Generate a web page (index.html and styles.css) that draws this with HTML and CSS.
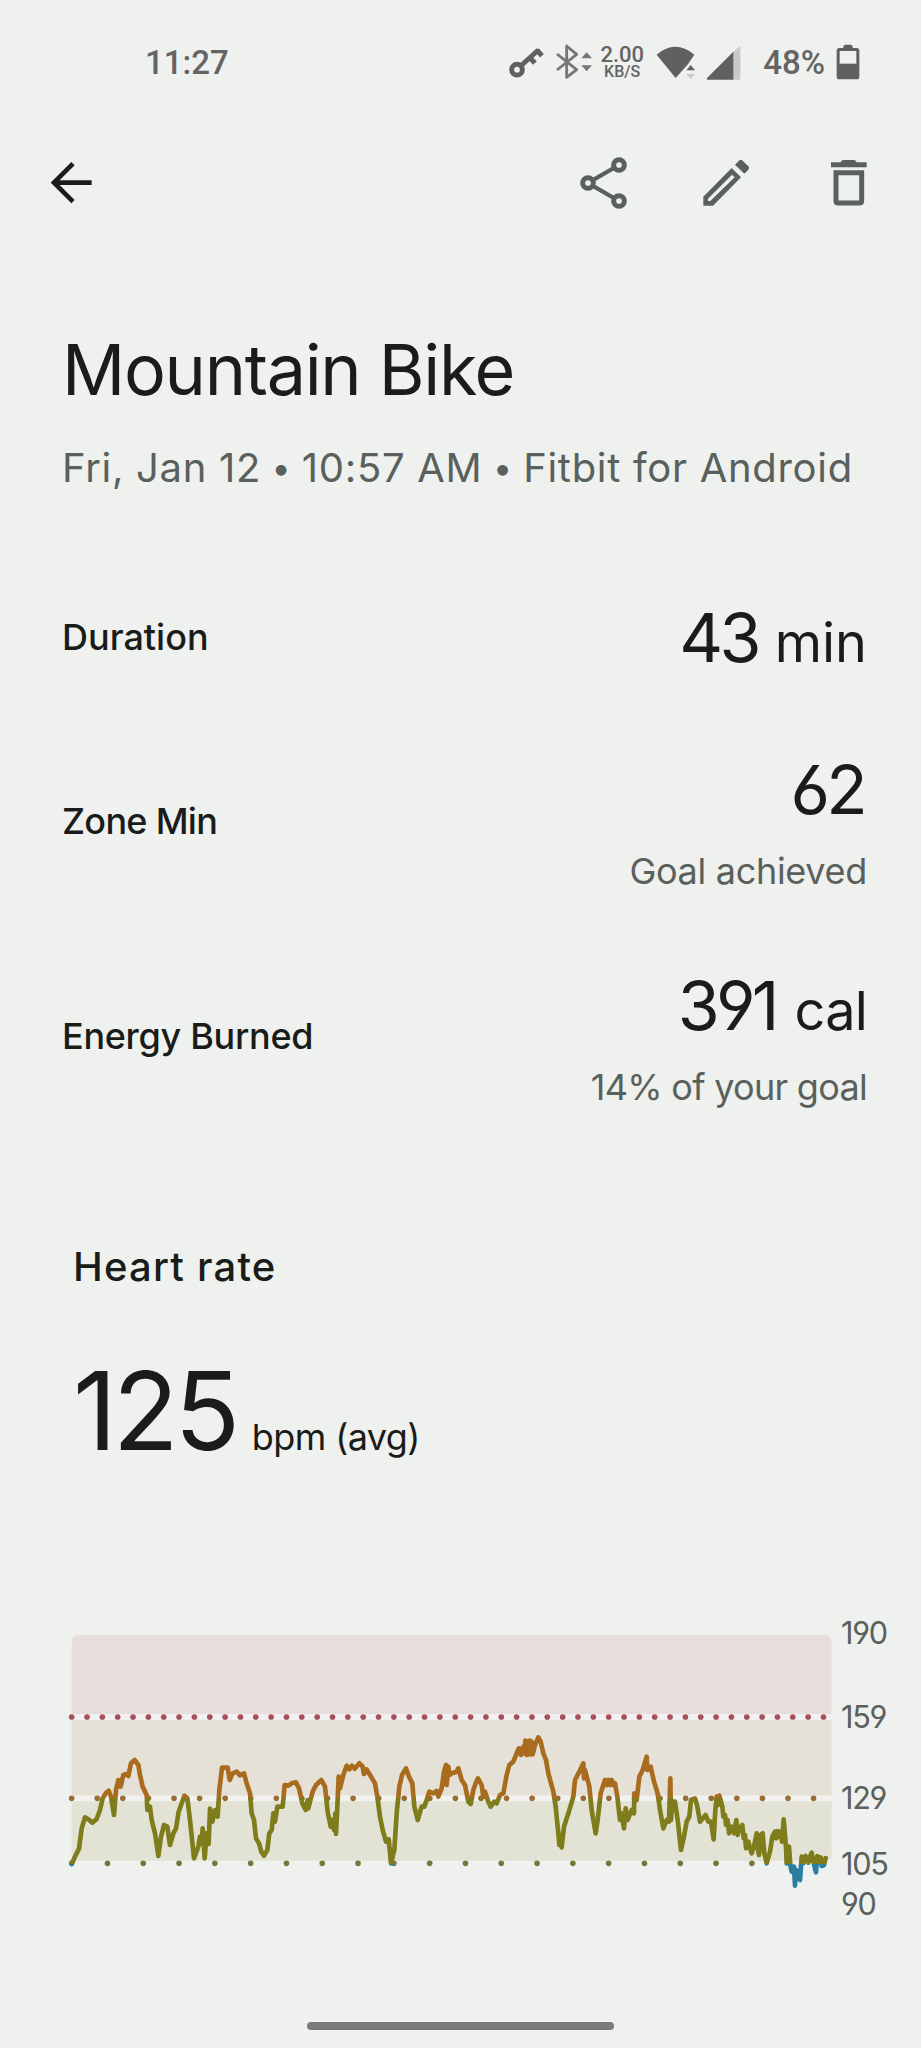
FILE: index.html
```html
<!DOCTYPE html>
<html lang="en">
<head>
  <meta charset="UTF-8">
  <meta name="viewport" content="width=device-width, initial-scale=1.0">
  <title>Mountain Bike</title>
  <link rel="stylesheet" href="styles.css">
</head>
<body>
  <div class="status-bar">
    <span class="clock">11:27</span>
    <div class="status-icons">
      <svg class="icon-key" width="36" height="32" viewBox="0 0 108 96">
        <circle cx="24" cy="71" r="16" fill="none" stroke="#5f605f" stroke-width="15"/>
        <path d="M35 60L88 12M83 12L99 29M62 35L78 51" fill="none" stroke="#5f605f" stroke-width="15"/>
      </svg>
      <svg class="icon-bt" width="36" height="38" viewBox="0 0 108 114">
        <path d="M3 33L62 80L32 103V9L62 34L3 81" fill="none" stroke="#757675" stroke-width="8.5" stroke-linejoin="round"/>
        <path d="M76 46L92 28L108 46ZM76 67L92 85L108 67Z" fill="#757675"/>
      </svg>
      <div class="net-speed">
        <span class="speed">2.00</span>
        <span class="unit">KB/S</span>
      </div>
      <svg class="icon-wifi" width="39" height="34" viewBox="0 0 117 102">
        <path d="M2 29Q58 -18 115 29L96 58L85 70L59 99Z" fill="#5f605f"/>
        <path d="M91 76L104 60L117 76Z" fill="#5f605f"/>
        <path d="M91 87L104 101L117 87Z" fill="#c8c9c8"/>
      </svg>
      <svg class="icon-signal" width="35" height="36" viewBox="0 0 105 108">
        <path d="M103 2V104H80V22Z" fill="#c8c9c8"/>
        <path d="M82 20V104H5Q0 104 3 99Z" fill="#5f605f"/>
      </svg>
      <span class="battery-text">48%</span>
      <svg class="icon-battery" width="24" height="36" viewBox="0 0 72 108">
        <path d="M22 8Q22 2 28 2H44Q50 2 50 8V12H62Q70 12 70 20V98Q70 106 62 106H10Q2 106 2 98V20Q2 12 10 12H22Z" fill="#5f605f"/>
        <path d="M11 21H61V59H11Z" fill="#eef1ee"/>
      </svg>
    </div>
  </div>

  <div class="app-bar">
    <svg class="back" width="42" height="42" viewBox="0 0 126 126">
      <path d="M66 5L9 62L66 119M9 62H122" fill="none" stroke="#1a1c1a" stroke-width="14"/>
    </svg>
    <div class="actions">
      <svg width="48" height="52" viewBox="0 0 144 156">
        <path d="M117 24L24 78L117 132" fill="none" stroke="#5a605c" stroke-width="13"/>
        <g fill="#eef1ee" stroke="#5a605c" stroke-width="15">
          <circle cx="117" cy="24" r="16"/>
          <circle cx="24" cy="78" r="16"/>
          <circle cx="117" cy="132" r="16"/>
        </g>
      </svg>
      <svg width="48" height="48" viewBox="0 0 144 144">
        <path d="M1 113L86 27L114 55L30 140H1ZM15 119V126H22L95 55L87 47Z" fill="#5a605c" fill-rule="evenodd"/>
        <path d="M96 17L108 5Q113 0 119 5L136 22Q141 27 136 32L124 44Z" fill="#5a605c"/>
      </svg>
      <svg width="38" height="48" viewBox="0 0 114 144">
        <path d="M3 10H32Q35 3 41 3H71Q77 3 80 10H110V25H3Z" fill="#5a605c"/>
        <path d="M18 41H95V125Q95 132 88 132H25Q18 132 18 125Z" fill="none" stroke="#5a605c" stroke-width="15"/>
      </svg>
    </div>
  </div>

  <div class="heading">
    <h1>Mountain Bike</h1>
    <p class="subtitle">Fri, Jan 12 <span class="dot">•</span> 10:57 AM <span class="dot">•</span> Fitbit for Android</p>
  </div>

  <div class="stats">
    <div class="stat">
      <span class="label duration">Duration</span>
      <div class="result">
        <div class="value"><span class="number">43</span><span class="value-unit">min</span></div>
      </div>
    </div>
    <div class="stat">
      <span class="label zone">Zone Min</span>
      <div class="result">
        <div class="value"><span class="number">62</span></div>
        <div class="goal">Goal achieved</div>
      </div>
    </div>
    <div class="stat">
      <span class="label energy">Energy Burned</span>
      <div class="result">
        <div class="value cal"><span class="number">391</span><span class="value-unit">cal</span></div>
        <div class="goal percent">14% of your goal</div>
      </div>
    </div>
  </div>

  <div class="heart-rate">
    <h2>Heart rate</h2>
    <div class="average"><span class="bpm">125</span><span class="bpm-unit">bpm (avg)</span></div>
  </div>

  <svg class="chart" width="861" height="320" viewBox="0 0 2583 960">
    <defs>
      <linearGradient id="zones" gradientUnits="userSpaceOnUse" x1="0" y1="0" x2="0" y2="960">
        <stop offset="0.557" stop-color="#a96b1e"/>
        <stop offset="0.557" stop-color="#7f7c1c"/>
        <stop offset="0.761" stop-color="#7f7c1c"/>
        <stop offset="0.761" stop-color="#2a7fa0"/>
      </linearGradient>
    </defs>
    <!-- zone bands -->
    <path d="M35 282V69Q35 45 59 45H2291Q2315 45 2315 69V282Z" fill="#e8dddb"/>
    <rect x="35" y="299" width="2280" height="228" fill="#e5e1d6"/>
    <path d="M35 544H2315V708Q2315 722 2301 722H35Z" fill="#e2e3d5"/>
    <path d="M35 291H2315M35 535H2315" stroke="#f1f2ef" stroke-width="15"/>
    <!-- zone limits -->
    <g fill="none" stroke-width="17" stroke-linecap="round">
      <path d="M35 291H2300" stroke="#a94f59" stroke-dasharray="0 46.03"/>
      <path d="M35 535H2270" stroke="#9a6c31" stroke-dasharray="0 76.75"/>
      <path d="M35 730H2100" stroke="#75783a" stroke-dasharray="0 107.4"/>
    </g>
    <polyline fill="none" stroke="url(#zones)" stroke-width="14" stroke-linecap="round" stroke-linejoin="round" points="
      35,732 45,710 57,686 65,625 75,592 88,600 97,608 110,597 120,570 128,535 137,520 146,512 153,530 162,585 168,510 175,480 182,500 190,465 198,462 205,468 213,430 224,420 235,435 240,465 248,500 260,525 262,570 270,560 275,600 285,640 295,708 303,650 312,615 322,620 330,675 340,640 348,625 356,575 373,527 382,535 390,600 402,715 415,680 420,650 425,670 428,625 434,715 440,640 446,672 450,566 457,605 465,570 473,590 478,510 486,443 503,443 509,480 518,460 530,455 540,466 552,460 560,490 570,520 575,580 582,600 588,655 597,670 604,695
      612,707 622,690 628,640 635,630 640,580 645,605 652,560 668,560 674,495 685,497 695,490 708,487 717,505 727,550 737,570 743,540 745,565 750,545 758,515 768,495 784,480 795,500 803,575 812,620 818,600 822,630 826,580 828,642 832,560 836,470 840,505 850,465 860,437 868,448 876,437 884,446 898,430 908,440 912,462 920,448 930,465 945,490 952,530 960,590 968,630 978,665 986,658 993,730 1003,690 1010,580 1018,500 1026,465 1038,445 1047,470 1057,490 1063,560 1073,600 1085,560 1093,560 1100,540 1108,515 1120,520 1130,513 1135,530 1145,505 1152,455 1158,435 1160,495 1165,440 1168,465 1175,460 1190,455 1195,445 1205,480 1215,495 1225,545
      1232,552 1240,510 1247,490 1254,475 1265,495 1270,530 1275,515 1285,545 1292,560 1303,545 1310,550 1320,525 1330,520 1340,465 1348,435 1360,425 1370,400 1377,385 1383,405 1390,380 1393,400 1396,362 1400,405 1403,365 1406,403 1409,362 1412,403 1415,365 1418,403 1425,375 1435,352 1442,365 1450,400 1458,420 1465,460 1480,515 1487,560 1491,600 1495,640 1498,675 1500,645 1505,682 1512,620 1525,580 1540,530 1545,480 1558,455 1570,430 1572,475 1575,450 1588,500 1595,570 1607,640 1613,600 1622,520 1635,480 1640,495 1645,480 1650,495 1655,480 1660,495 1665,490 1672,530 1680,600 1684,580 1692,625 1697,565 1703,600 1715,570 1722,580 1723,520 1730,540 1738,470 1748,450 1760,410 1762,450 1772,440 1782,485 1793,520 1800,570
      1810,625 1820,600 1827,605 1831,475 1833,600 1837,545 1845,545 1853,600 1863,690 1872,650 1880,605 1888,590 1893,540 1905,535 1912,560 1920,605 1937,585 1945,605 1953,605 1961,658 1966,570 1970,530 1975,555 1978,527 1987,560 1990,590 1995,585 1998,615 2003,600 2007,640 2015,620 2022,640 2029,600 2033,645 2037,628 2047,615 2051,655 2055,645 2058,685 2065,665 2070,685 2075,700 2083,675 2090,640 2094,690 2097,705 2102,645 2108,640 2113,700 2120,730 2130,695 2137,650 2145,635 2149,655 2153,633 2158,650 2162,635 2166,665 2171,598 2178,680 2180,730 2187,680 2191,735 2195,755 2202,740 2205,797 2209,750 2213,770 2220,780 2225,710 2230,730 2237,708 2245,728 2250,710 2255,698 2260,725 2268,757 2272,708 2277,725 2282,712 2285,738 2292,735 2297,714"/>
    <g class="axis">
      <text x="2343" y="71">190</text>
      <text x="2343" y="324">159</text>
      <text x="2343" y="567">129</text>
      <text x="2343" y="765">105</text>
      <text x="2343" y="885">90</text>
    </g>
  </svg>

  <div class="home-indicator"></div>
</body>
</html>
```
FILE: styles.css
```css
* {
  box-sizing: border-box;
}
body {
  margin: 0;
  height: 2048px;
  overflow: hidden;
  display: flex;
  flex-direction: column;
  background-color: #eef1ee;
  color: #1a1c1a;
  font-family: Inter, "Liberation Sans", sans-serif;
  font-feature-settings: "cv03", "cv04";
  white-space: nowrap;
}
h1, h2, p {
  margin: 0;
  font-weight: 400;
}
svg {
  display: block;
  flex-shrink: 0;
}
.status-bar {
  height: 124px;
  padding: 0 61px 0 145px;
  display: flex;
  align-items: center;
  justify-content: space-between;
  font-family: Roboto, sans-serif;
  font-weight: 500;
  font-size: 33px;
  color: #636463;
}
.status-icons {
  display: flex;
  align-items: center;
}
.icon-bt {
  margin-left: 11px;
}
.net-speed {
  margin: 0 12px 0 8px;
  width: 44px;
  display: flex;
  flex-direction: column;
  align-items: center;
}
.speed {
  font-size: 22px;
  line-height: 19px;
}
.unit {
  font-size: 16px;
  line-height: 15px;
}
.icon-signal {
  margin: 2px 22px 0 11px;
}
.icon-battery {
  margin-left: 11px;
}
.app-bar {
  height: 118px;
  padding: 0 53px 0 51px;
  display: flex;
  align-items: center;
  justify-content: space-between;
}
.actions {
  display: flex;
  align-items: center;
  gap: 75px;
}
.actions svg:last-child {
  margin-left: 4px;
}
.heading {
  padding: 86px 0 0 62px;
}
h1 {
  font-size: 70px;
  line-height: 84px;
  letter-spacing: -1.3px;
}
.subtitle {
  margin-top: 28px;
  font-size: 40px;
  line-height: 56px;
  letter-spacing: 0.7px;
  color: #5a605c;
}
.dot {
  margin: 0 -1.5px;
  font-size: 34px;
  line-height: 1;
  vertical-align: 2px;
}
.stats {
  padding: 99px 54px 0 62px;
  display: flex;
  flex-direction: column;
  gap: 67.5px;
}
.stat {
  display: flex;
  align-items: center;
  justify-content: space-between;
}
.label {
  font-size: 36px;
  line-height: 50px;
  font-weight: 500;
}
.zone {
  letter-spacing: -0.7px;
}
.energy {
  margin-bottom: 4px;
  letter-spacing: -0.3px;
}
.result {
  display: flex;
  flex-direction: column;
  align-items: flex-end;
}
.value {
  display: flex;
  align-items: baseline;
  gap: 14px;
  font-size: 68px;
  line-height: 84px;
}
.number {
  margin-right: 3px;
  letter-spacing: -3.8px;
}
.value-unit {
  font-size: 54px;
  line-height: 1;
}
.cal {
  gap: 16px;
}
.cal .value-unit {
  letter-spacing: -0.8px;
}
.goal {
  margin-top: 15px;
  font-size: 36px;
  line-height: 50px;
  letter-spacing: -0.3px;
  color: #5a605c;
}
.percent {
  letter-spacing: -0.7px;
}
.heart-rate {
  padding: 127px 0 0 73px;
}
h2 {
  font-size: 40px;
  line-height: 56px;
  font-weight: 500;
  letter-spacing: 1.2px;
}
.average {
  margin-top: 56px;
  display: flex;
  align-items: baseline;
  gap: 16px;
}
.bpm {
  font-size: 108px;
  line-height: 120px;
  letter-spacing: -4.2px;
}
.bpm-unit {
  font-size: 36px;
  line-height: 1;
  letter-spacing: -0.6px;
}
.chart {
  margin: 149px 0 0 60px;
  overflow: visible;
}
.axis {
  font-size: 92px;
  letter-spacing: -4px;
  fill: #5a605c;
}
.home-indicator {
  width: 307px;
  height: 8px;
  margin: 82px auto 0;
  border-radius: 4px;
  background-color: #7a7b7a;
}
```
